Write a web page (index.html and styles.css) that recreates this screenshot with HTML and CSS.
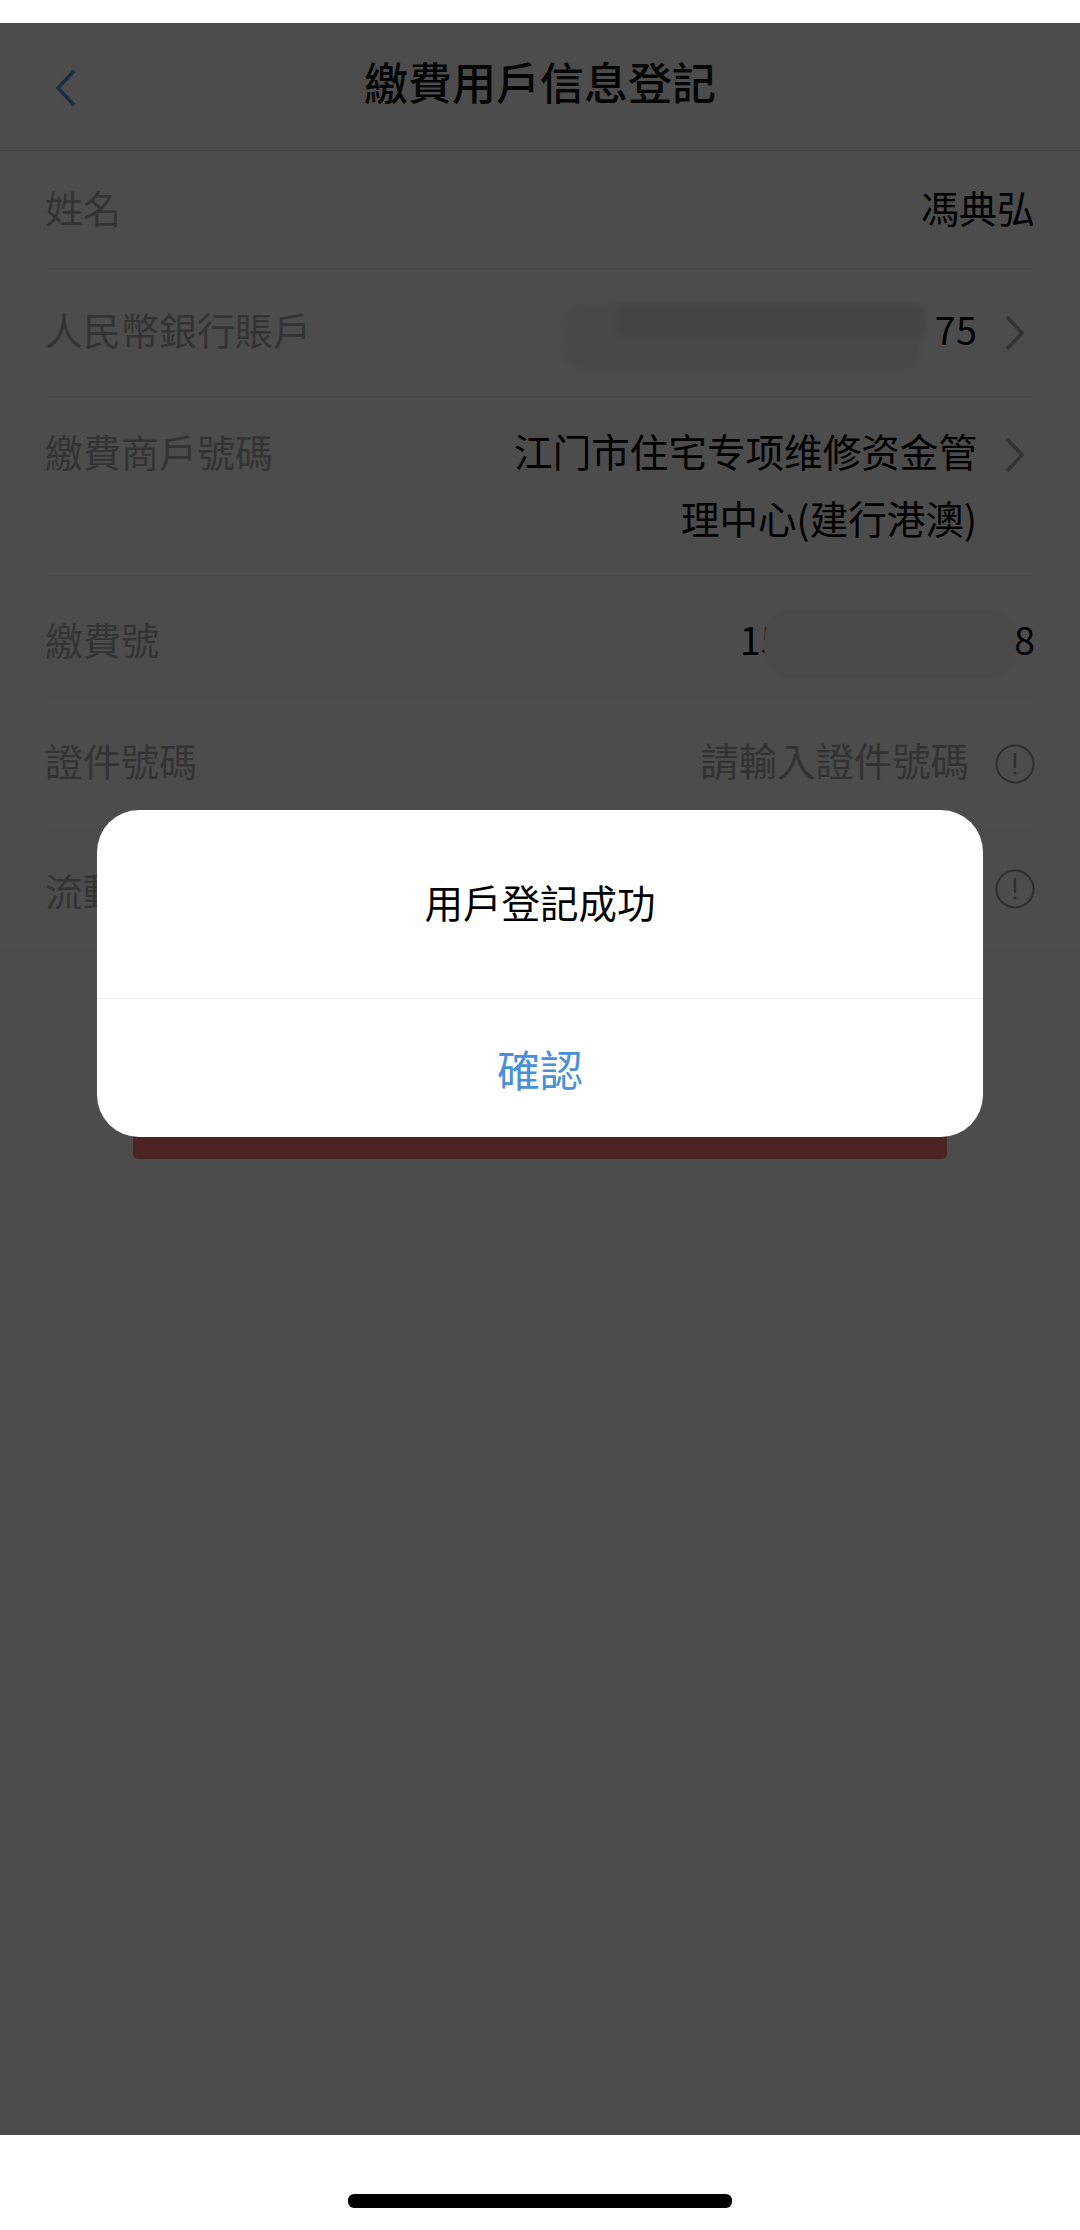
FILE: index.html
```html
<!DOCTYPE html>
<html lang="zh-Hant">
<head>
    <meta charset="UTF-8">
    <meta name="viewport" content="width=device-width, initial-scale=1.0">
    <title>繳費用戶信息登記</title>
    <link rel="stylesheet" href="styles.css">
</head>
<body>
    <div class="status-gap"></div>

    <main class="screen">
        <header class="topbar">
            <svg class="back" width="22" height="38" viewBox="0 0 22 38"><path d="M19 2 3 19l16 17" fill="none" stroke="#4a90d9" stroke-width="3.4"/></svg>
            <h1>繳費用戶信息登記</h1>
        </header>

        <section class="form">
            <div class="row row-name">
                <span class="label">姓名</span>
                <span class="value">馮典弘</span>
            </div>
            <div class="row row-bank">
                <span class="label">人民幣銀行賬戶</span>
                <span class="value">75</span>
                <svg class="chevron" width="20" height="36" viewBox="0 0 20 36"><path d="M2 2l15 16L2 34" fill="none" stroke="#aaa" stroke-width="3.6"/></svg>
                <div class="smudge smudge-bank-low"></div>
                <div class="smudge smudge-bank-high"></div>
            </div>
            <div class="row row-merchant">
                <span class="label">繳費商戶號碼</span>
                <span class="value value-wrap">江门市住宅专项维修资金管理中心(建行港澳)</span>
                <svg class="chevron" width="20" height="36" viewBox="0 0 20 36"><path d="M2 2l15 16L2 34" fill="none" stroke="#aaa" stroke-width="3.6"/></svg>
            </div>
            <div class="row row-pay">
                <span class="label">繳費號</span>
                <span class="value">15000000000008</span>
                <div class="smudge smudge-pay"></div>
            </div>
            <div class="row row-id">
                <span class="label">證件號碼</span>
                <span class="placeholder">請輸入證件號碼</span>
                <svg class="info info-id" width="40" height="40" viewBox="0 0 40 40"><circle cx="20" cy="20" r="18.5" fill="none" stroke="#999" stroke-width="2"/><path d="M20 9v15" stroke="#999" stroke-width="2.4"/><circle cx="20" cy="29" r="1.6" fill="#999"/></svg>
            </div>
            <div class="row row-mobile">
                <span class="label">流動電話</span>
                <span class="placeholder">請輸入流動電話</span>
                <svg class="info" width="40" height="40" viewBox="0 0 40 40"><circle cx="20" cy="20" r="18.5" fill="none" stroke="#999" stroke-width="2"/><path d="M20 9v15" stroke="#999" stroke-width="2.4"/><circle cx="20" cy="29" r="1.6" fill="#999"/></svg>
            </div>
        </section>

        <button class="submit" type="button"></button>

        <div class="overlay">
            <div class="dialog">
                <p class="dialog-text">用戶登記成功</p>
                <div class="dialog-action">確認</div>
            </div>
        </div>
    </main>

    <footer class="home-area">
        <div class="home-bar"></div>
    </footer>
</body>
</html>
```

FILE: styles.css
```css
* {
    margin: 0;
    padding: 0;
    box-sizing: border-box;
    font-family: "Noto Sans CJK TC", "Liberation Sans", sans-serif;
}

body {
    width: 1080px;
    height: 2230px;
    background: #fff;
    color: #000;
    overflow: hidden;
}

.status-gap {
    height: 23px;
}

.screen {
    position: relative;
    height: 2112px;
    background: #fff;
}

.topbar {
    position: relative;
    height: 128px;
    display: flex;
    align-items: center;
    justify-content: center;
    border-bottom: 1px solid #e6e6e6;
    padding-bottom: 12px;
}

.topbar h1 {
    font-size: 44px;
    font-weight: 500;
    line-height: 1;
    color: #111;
}

.back {
    position: absolute;
    left: 55px;
    top: 46px;
}

.form {
    border-bottom: 1px solid #f0f0f0;
}

.row {
    position: relative;
    display: flex;
    align-items: flex-start;
    margin: 0 45px;
    border-bottom: 1px solid #f0f0f0;
    font-size: 38px;
    line-height: 67px;
}

.row:last-child {
    border-bottom: none;
}

.row-name { height: 118px; padding-top: 22px; }
.row-bank { height: 128px; padding-top: 26px; }
.row-merchant { height: 179px; padding-top: 20px; }
.row-pay { height: 122px; padding-top: 29px; }
.row-id { height: 132px; padding-top: 28px; }
.row-mobile { height: 119px; padding-top: 26px; }

.label {
    color: #aaa;
    white-space: nowrap;
}

.value {
    margin-left: auto;
    color: #000;
    white-space: nowrap;
    position: relative;
}

.value-wrap {
    width: 466px;
    white-space: normal;
    text-align: right;
    font-size: 38.6px;
}

.placeholder {
    margin-left: auto;
    color: #a8a8a8;
    font-size: 38.4px;
}

.chevron {
    flex: none;
    margin: 20px 10px 0 28px;
}

.info {
    flex: none;
    margin: 13px 0 0 26px;
}

.info-id {
    margin-top: 18px;
}

/* hand-painted blur over the account numbers */
.smudge {
    position: absolute;
    filter: blur(3px);
}

.smudge-bank-low {
    left: 517px;
    top: 33px;
    width: 360px;
    height: 70px;
    border-radius: 22px;
    background: #f6f6f6;
}

.smudge-bank-high {
    left: 570px;
    top: 36px;
    width: 310px;
    height: 33px;
    background: #e4e4e4;
}

.smudge-pay {
    left: 719px;
    top: 34px;
    width: 252px;
    height: 68px;
    border-radius: 26px;
    background: #f8f8f8;
    filter: blur(1px);
}

.submit {
    display: block;
    width: 814px;
    height: 89px;
    margin: 120px 0 0 133px;
    border: none;
    border-radius: 5px;
    background: #ff7871;
}

.overlay {
    position: absolute;
    inset: 0;
    background: rgba(0, 0, 0, 0.7);
    padding: 787px 97px 0;
}

.dialog {
    width: 886px;
    height: 327px;
    background: #fff;
    border-radius: 42px;
    overflow: hidden;
}

.dialog-text {
    height: 189px;
    padding-top: 56px;
    border-bottom: 1px solid #eee;
    text-align: center;
    font-size: 38.5px;
    line-height: 70px;
}

.dialog-action {
    text-align: center;
    color: #4a90d9;
    font-size: 43px;
    line-height: 138px;
}

.home-area {
    height: 95px;
    padding-top: 59px;
}

.home-bar {
    width: 384px;
    height: 14px;
    margin: 0 auto;
    border-radius: 6px;
    background: #000;
}
```
